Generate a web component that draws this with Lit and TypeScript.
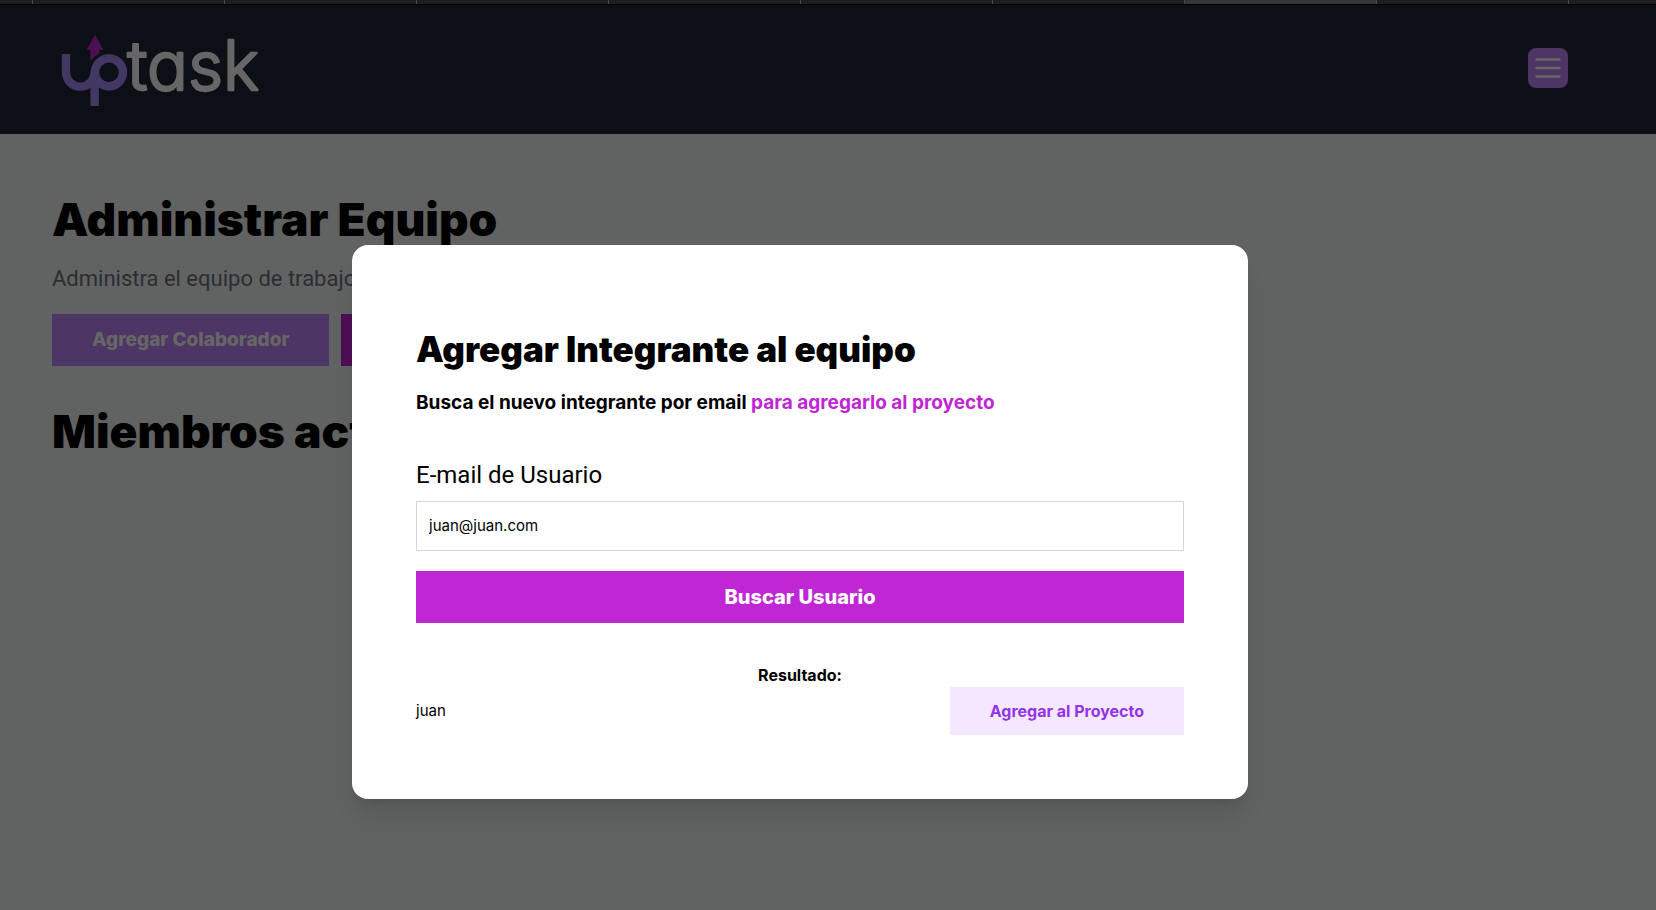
import { LitElement, html, css, svg } from "lit";
import { customElement, state } from "lit/decorators.js";

const logo = svg`
  <svg class="logo" viewBox="36 90 660 228" role="img" aria-label="uptask">
    <path class="mark" d="M78 162V217A43 43 0 0 0 164 217V318" />
    <circle class="mark" cx="207" cy="217" r="42" />
    <path class="arrow" d="M165 104L190 149H178V160Q163 168 151 182V149H140Z" />
    <text class="word" x="262" y="270">task</text>
  </svg>
`;

@customElement("app-header")
class AppHeader extends LitElement {
  static styles = css`
    :host {
      display: block;
      background: #1f2937;
    }
    .bar {
      display: flex;
      align-items: center;
      justify-content: space-between;
      padding: 25px 88px 28px 52px;
    }
    .home {
      display: block;
      line-height: 0;
    }
    .logo {
      display: block;
      width: 220px;
      height: 76px;
      overflow: visible;
    }
    .mark {
      fill: none;
      stroke: #a78bfa;
      stroke-width: 25;
      stroke-linejoin: round;
    }
    .arrow {
      fill: #c026d3;
    }
    .word {
      font-family: Inter, "Liberation Sans", sans-serif;
      font-size: 204px;
      font-weight: 300;
      font-feature-settings: "cv11";
      fill: #fff;
      stroke: #fff;
      stroke-width: 7px;
      stroke-linejoin: round;
    }
    .menu {
      display: grid;
      place-items: center;
      width: 40px;
      height: 40px;
      padding: 4px;
      border: 0;
      border-radius: 8px;
      background: #c084fc;
      color: #fff;
    }
    .menu svg {
      width: 32px;
      height: 32px;
    }
  `;

  render() {
    return html`
      <header class="bar">
        <a class="home" href="#inicio">${logo}</a>
        <button class="menu" type="button" aria-label="Abrir menú">
          <svg viewBox="0 0 32 32" fill="none" stroke="currentColor" stroke-width="2.4" stroke-linecap="round">
            <path d="M4.500 7.500H27.500M4.500 16H27.500M4.500 24.500H27.500" />
          </svg>
        </button>
      </header>
    `;
  }
}

@customElement("add-member-dialog")
class AddMemberDialog extends LitElement {
  @state() private email = "juan@juan.com";

  static styles = css`
    :host {
      display: block;
      width: 100%;
      max-width: 896px;
    }
    .panel {
      box-sizing: border-box;
      padding: 84px 64px 64px;
      border-radius: 16px;
      background: #fff;
      box-shadow: 0 20px 25px -5px rgba(0, 0, 0, 0.1), 0 8px 10px -6px rgba(0, 0, 0, 0.1);
    }
    .title {
      margin: 0;
      font-size: 35px;
      line-height: 40px;
      font-weight: 900;
    }
    .lead {
      margin: 20px 0 42px;
      font-size: 19px;
      line-height: 28px;
      font-weight: 700;
    }
    .accent {
      color: #c026d3;
    }
    .form {
      display: flex;
      flex-direction: column;
    }
    .label {
      margin-bottom: 10px;
      font-family: Roboto, Inter, sans-serif;
      font-size: 24px;
      line-height: 32px;
    }
    .field {
      box-sizing: border-box;
      width: 100%;
      margin-bottom: 20px;
      padding: 12px;
      border: 1px solid #d1d5db;
      border-radius: 0;
      background: #fff;
      color: #000;
      font: inherit;
      font-size: 15px;
      line-height: 24px;
      outline: none;
    }
    .search {
      padding: 12px 24px;
      border: 0;
      background: #c026d3;
      color: #fff;
      font: inherit;
      font-size: 20px;
      line-height: 28px;
      font-weight: 800;
    }
    .result {
      margin: 40px 0 0;
      text-align: center;
      font-weight: 700;
    }
    .row {
      display: flex;
      align-items: center;
      justify-content: space-between;
    }
    .name {
      margin: 0;
      font-size: 15px;
    }
    .add {
      padding: 12px 40px;
      border: 0;
      background: #f3e8ff;
      color: #9333ea;
      font: inherit;
      font-weight: 700;
    }
  `;

  render() {
    return html`
      <section class="panel" role="dialog" aria-modal="true" aria-labelledby="title">
        <h3 class="title" id="title">Agregar Integrante al equipo</h3>
        <p class="lead">Busca el nuevo integrante por email <span class="accent">para agregarlo al proyecto</span></p>
        <form class="form" @submit=${(e: Event) => e.preventDefault()}>
          <label class="label" for="email">E-mail de Usuario</label>
          <input
            class="field"
            id="email"
            type="email"
            .value=${this.email}
            @input=${(e: Event) => (this.email = (e.target as HTMLInputElement).value)}
          />
          <button class="search" type="submit">Buscar Usuario</button>
        </form>
        <p class="result">Resultado:</p>
        <div class="row">
          <p class="name">juan</p>
          <button class="add" type="button">Agregar al Proyecto</button>
        </div>
      </section>
    `;
  }
}

@customElement("app-root")
class AppRoot extends LitElement {
  static styles = css`
    :host {
      display: flex;
      flex-direction: column;
      position: relative;
      min-height: 100vh;
      background: #f3f7f4;
      color: #000;
      font-family: Inter, "Liberation Sans", sans-serif;
      font-size: 16px;
      line-height: 24px;
    }
    .tabs {
      display: grid;
      grid-template-columns: 32px repeat(8, 192px) 1fr;
      height: 4px;
      overflow: hidden;
      background: #1e1e1e;
      border-bottom: 1px solid #000;
    }
    .tab {
      border-left: 1px solid #4a4a4a;
    }
    .tab.first {
      border-left: 0;
    }
    .tab.active {
      background: #363636;
    }
    .page {
      position: relative;
      flex: 1;
    }
    .main {
      padding: 60px 52px;
    }
    .heading {
      margin: 0;
      font-size: 46px;
      line-height: 50px;
      font-weight: 900;
    }
    .intro {
      margin: 19px 0;
      font-family: Roboto, Inter, sans-serif;
      font-size: 22px;
      line-height: 32px;
      color: #6b7280;
    }
    .actions {
      display: flex;
      gap: 12px;
      margin-bottom: 40px;
    }
    .action {
      padding: 12px 40px;
      background: #c084fc;
      color: #fff;
      font-size: 19px;
      line-height: 28px;
      font-weight: 800;
      text-decoration: none;
    }
    .action.back {
      background: #c026d3;
    }
    .backdrop {
      position: absolute;
      inset: 0;
      display: flex;
      justify-content: center;
      align-items: flex-start;
      padding: 240px 56px 0 0;
      background: rgba(0, 0, 0, 0.6);
    }
  `;

  render() {
    return html`
      <div class="tabs" aria-hidden="true">
        ${Array.from({ length: 10 }, (_, i) => html`<span class="tab ${i === 0 ? "first" : i === 7 ? "active" : ""}"></span>`)}
      </div>
      <div class="page">
        <app-header></app-header>
        <main class="main">
          <h1 class="heading">Administrar Equipo</h1>
          <p class="intro">Administra el equipo de trabajo</p>
          <nav class="actions">
            <a class="action" href="#agregar">Agregar Colaborador</a>
            <a class="action back" href="#proyecto">Volver</a>
          </nav>
          <h2 class="heading">Miembros actuales</h2>
        </main>
        <div class="backdrop"><add-member-dialog></add-member-dialog></div>
      </div>
    `;
  }
}
